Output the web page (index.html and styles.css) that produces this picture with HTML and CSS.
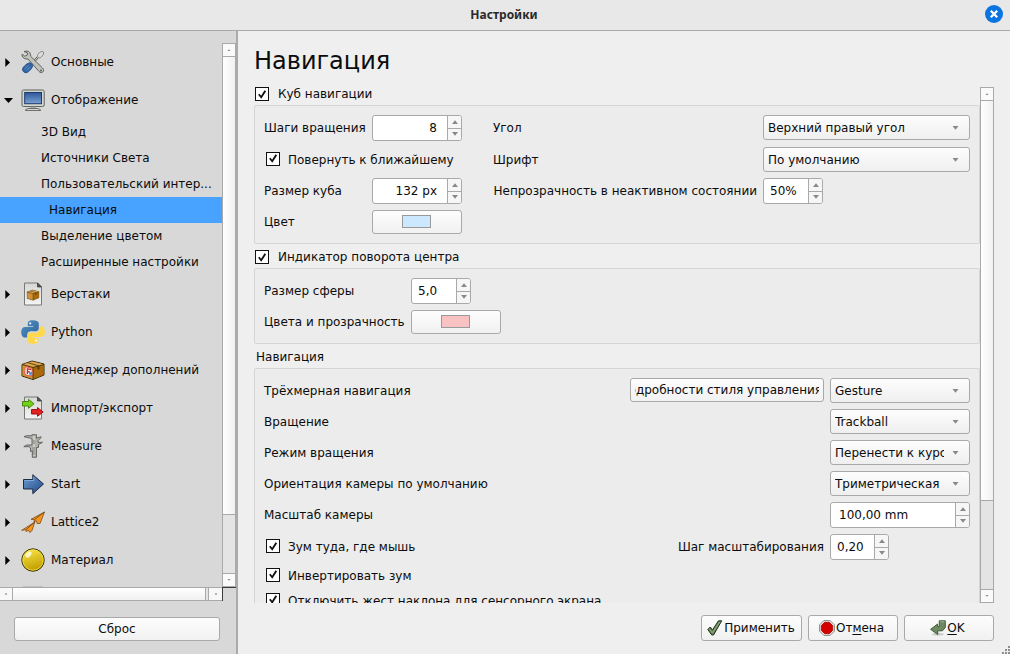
FILE: index.html
```html
<!DOCTYPE html>
<html lang="ru">
<head>
<meta charset="utf-8">
<title>Настройки</title>
<link rel="stylesheet" href="styles.css">
</head>
<body>
<svg class="defs" width="0" height="0">
  <defs>
    <linearGradient id="gBlue" x1="0" y1="0" x2="1" y2="1"><stop offset="0" stop-color="#6f9bd0"/><stop offset="1" stop-color="#204a87"/></linearGradient>
    <linearGradient id="gScreen" x1="0" y1="0" x2="0" y2="1"><stop offset="0" stop-color="#2d5797"/><stop offset="1" stop-color="#7ba2d6"/></linearGradient>
    <linearGradient id="gYellow" x1="0" y1="0" x2="0.3" y2="1"><stop offset="0" stop-color="#fce94f"/><stop offset="1" stop-color="#c4a000"/></linearGradient>
    <linearGradient id="gPage" x1="0" y1="0" x2="0" y2="1"><stop offset="0" stop-color="#d6d8d4"/><stop offset="1" stop-color="#f4f4f3"/></linearGradient>
    <linearGradient id="gPy" x1="0" y1="0" x2="1" y2="1"><stop offset="0" stop-color="#4f8fc4"/><stop offset="1" stop-color="#2f6699"/></linearGradient>
    <symbol id="box" viewBox="0 0 24 24">
      <path d="M1 6.500 11 3l12 3v11l-11 4.500L1 18z" fill="#c17d11" stroke="#3a2a0a"/>
      <path d="M1.500 6.800 12 9.500v11.500L1.500 17.600z" fill="#d0913a"/>
      <path d="M12 9.500l10.500-3v10.300L12 21z" fill="#a9690c"/>
      <path d="M1.800 6.500 11 3.500l11.300 2.700L12 9z" fill="#dba753"/>
      <path d="M6 5.100l10.500 2.800 2-.5L8 4.400z" fill="#6d4a12"/>
      <path d="M16.500 8.300l2-.6v3.300l-2 1z" fill="#5a3a08"/>
      <path d="M1 6.500l11 3 11-3M12 9.500v12" fill="none" stroke="#3a2a0a" stroke-width=".8"/>
    </symbol>
    <symbol id="spin-up" viewBox="0 0 6 4"><path d="M0 4 3 .3 6 4z" fill="#888"/></symbol>
    <symbol id="spin-dn" viewBox="0 0 6 4"><path d="M0 0 3 3.700 6 0z" fill="#888"/></symbol>
    <symbol id="tick" viewBox="0 0 8 9"><path d="M.8 4.200 3.200 7.300 7.300.8" fill="none" stroke="#111" stroke-width="1.800"/></symbol>
    <symbol id="closed" viewBox="0 0 5 9"><path d="M.3 0 5 4.500.3 9z" fill="#000"/></symbol>
    <symbol id="page" viewBox="0 0 24 24"><path d="M3.500 1h13.200l3.800 3.800V23h-17z" fill="url(#gPage)" stroke="#777975"/><path d="M16.500 1l4 4h-4z" fill="#555" stroke="#222" stroke-width=".6"/></symbol>
  </defs>
</svg>

<div class="window">
  <header class="titlebar">
    <span class="title">Настройки</span>
    <svg class="close" viewBox="0 0 20 20"><circle cx="10" cy="10" r="9" fill="#0a74e0"/><path d="M6.800 6.800l6.400 6.400M13.200 6.800l-6.400 6.400" stroke="#fff" stroke-width="2.300"/></svg>
  </header>

  <div class="body">
    <aside class="sidebar">
      <div class="tree-area">
        <nav class="tree">
          <div class="node"><svg class="exp"><use href="#closed"/></svg>
            <svg class="ico" viewBox="0 0 24 24"><path d="M22.300 2c-.8-1.500-4 .2-5.300 2.300-.8 1.400-.5 2.500.3 3.200.8.6 2 .5 3-.5 1.700-1.800 2.800-3.800 2-5z" fill="#dcdedb" stroke="#6b6d69" stroke-width=".8"/><path d="M16.500 7.500 10.800 14" stroke="#555753" stroke-width="2.200"/><path d="M16.500 7.500 10.800 14" stroke="#d3d7cf" stroke-width="1"/><path d="M3 1.500 6 1c2.500.3 4 2.800 3.600 5.200L21.500 18c2 1.800 1 4.600-1.300 4.600-1 0-1.700-.6-2.300-1.300L7 9C4.300 9.500 1.800 8 1 5.800l.2-1.600 2.600 2L6.300 5l.2-2z" fill="#bfc3bb" stroke="#555753" stroke-width=".9"/><path d="M9.300 12.800l2.300 2.400c.5 2-3.800 7.300-6.300 7.500-2.200.2-4-1.700-3.700-3.700.4-2.400 5.500-6.600 7.700-6.200z" fill="#3465a4" stroke="#204a87" stroke-width=".9"/><path d="M3.500 19l4-3.700M6 20.500l3-3.500" stroke="#6e99d2"/><circle cx="20" cy="20.500" r=".9" fill="#555"/></svg>
            <span>Основные</span></div>
          <div class="node"><svg class="exp-open" viewBox="0 0 9 5"><path d="M0 0h9L4.500 5z"/></svg>
            <svg class="ico" viewBox="0 0 24 24"><rect x="1" y="2" width="22.200" height="16.500" rx="1.500" fill="#d3d7cf" stroke="#62645f"/><rect x="3.700" y="4.500" width="16.800" height="11.200" fill="url(#gScreen)" stroke="#1c3a6b"/><path d="M9 18.800h6v1.700H9z" fill="#a8aba4"/><path d="M7 20.500h10l2.500 1.200v.8h-15v-.8z" fill="#d3d7cf" stroke="#555753" stroke-width=".8"/></svg>
            <span>Отображение</span></div>
          <div class="leaf">3D Вид</div>
          <div class="leaf">Источники Света</div>
          <div class="leaf">Пользовательский интер...</div>
          <div class="leaf selected">Навигация</div>
          <div class="leaf">Выделение цветом</div>
          <div class="leaf">Расширенные настройки</div>
          <div class="node"><svg class="exp"><use href="#closed"/></svg>
            <svg class="ico" viewBox="0 0 24 24"><use href="#page"/><use href="#box" x="5.500" y="6.500" width="13" height="13"/></svg>
            <span>Верстаки</span></div>
          <div class="node"><svg class="exp"><use href="#closed"/></svg>
            <svg class="ico" viewBox="0 0 24 24"><path d="M11.800.3C8 .3 6.800 1.800 6.800 3.700v2.500h5.500V7H4.200C1.500 7 .2 9 .2 12s1.300 5.500 3.600 5.500h2.400v-2.700c0-2 1.600-3.500 3.500-3.500h5.200c1.700 0 2.900-1.400 2.900-3V3.700c0-2-2-3.400-6-3.400z" fill="url(#gPy)"/><path d="M12.300 23.800c3.800 0 5-1.500 5-3.400v-2.500h-5.500v-.8h8.100c2.700 0 4-2 4-5s-1.300-5.600-3.600-5.600h-2v2.800c0 2-1.600 3.400-3.500 3.400H9.400c-1.700 0-2.900 1.500-2.900 3v4.700c0 2 2 3.400 5.800 3.400z" fill="#ffd94a"/><circle cx="9.200" cy="3.400" r="1.100" fill="#e4ecf3"/><circle cx="15" cy="20.700" r="1.100" fill="#fff7cf"/></svg>
            <span>Python</span></div>
          <div class="node"><svg class="exp"><use href="#closed"/></svg>
            <svg class="ico" viewBox="0 0 24 24"><use href="#box" y="0" width="24" height="24"/><path d="M5 8.800l5 1.400c1.500.8 1.800 6.500.3 7.800l-5.800-1.200c-1-1.500-1-7 .5-8z" fill="#f2f5fa" stroke="#e8413c" stroke-width=".8"/><path d="M6.400 16V10.800l3.600.8M6.400 13.500l2.600.6" fill="none" stroke="#cc2b26" stroke-width="1.300"/><path d="M8.500 16.500l2.500-2" stroke="#4a90d9" stroke-width="2.400"/></svg>
            <span>Менеджер дополнений</span></div>
          <div class="node"><svg class="exp"><use href="#closed"/></svg>
            <svg class="ico" viewBox="0 0 24 24"><use href="#page"/><path d="M1.500 5.500h6V3.300L13 7.800l-5.500 4.500V10h-6z" fill="#73d216" stroke="#3f7d08" stroke-width=".9"/><path d="M10.500 13.500h6v-2l5.700 4.500-5.700 4.300v-2.300h-6z" fill="#e32222" stroke="#8c0a0a" stroke-width=".9"/></svg>
            <span>Импорт/экспорт</span></div>
          <div class="node"><svg class="exp"><use href="#closed"/></svg>
            <svg class="ico" viewBox="0 0 24 24"><path d="M3 2.700 5.500 1.700H11V.7h4.500v3.500l4.500-1.500v1l-3 3v1.600h4.500L17.500 10.500v3H15.500v9.800H11.300V17L9.500 17.500V14L8 12.700H2.800L5.500 11H11V5L9 4z" fill="#aeb2aa" stroke="#50524d" stroke-width=".8"/><path d="M13 2v20" stroke="#e3e5e1"/><path d="M11.500 14h2.500M11.500 16h2.500M11.500 18h2.500M11.500 20h2.500M12 7h2M12 9h2" stroke="#555753" stroke-width=".7"/></svg>
            <span>Measure</span></div>
          <div class="node"><svg class="exp"><use href="#closed"/></svg>
            <svg class="ico" viewBox="0 0 24 24"><path d="M2.500 7.500h9.300V2.700L22.500 12 11.800 21.700V17H2.500z" fill="url(#gBlue)" stroke="#1c2b45" stroke-width="1"/><path d="M3.500 8.500h9.300V5" fill="none" stroke="#8fb3e0" stroke-width=".8"/></svg>
            <span>Start</span></div>
          <div class="node"><svg class="exp"><use href="#closed"/></svg>
            <svg class="ico" viewBox="0 0 24 24"><path d="M23.500 2 10 9.300l3.300.4-.3 2 2.400-1 .7 2.800h3z" fill="#f79520" stroke="#6b4010" stroke-width=".7"/><path d="M13.800 12 .7 20.300l4-.6.300 1.800 2.500-1.200 1.300 2.200 2.300-2z" fill="#f79520" stroke="#6b4010" stroke-width=".7"/><path d="M23.500 2 13.300 9.700M13.800 12 5 19.700" stroke="#5c3408" stroke-width=".7"/></svg>
            <span>Lattice2</span></div>
          <div class="node"><svg class="exp"><use href="#closed"/></svg>
            <svg class="ico" viewBox="0 0 24 24"><circle cx="12" cy="12" r="11.200" fill="url(#gYellow)" stroke="#302b00"/><circle cx="12" cy="12" r="10.200" fill="none" stroke="#f5e14a" stroke-width=".8"/><ellipse cx="7.500" cy="6.500" rx="3.600" ry="2.300" fill="#fffbe0" opacity=".85" transform="rotate(-45 7.500 6.500)"/></svg>
            <span>Материал</span></div>
          <div class="node"><svg class="ico last" viewBox="0 0 24 24"><rect x="2" width="20" height="22" fill="#bfbfbf"/></svg></div>
        </nav>
        <div class="vscroll">
          <div class="vbtn"><svg><use href="#spin-up"/></svg></div>
          <div class="vthumb side-thumb"></div>
          <div class="vtrack"></div>
          <div class="vbtn end"><svg><use href="#spin-dn"/></svg></div>
        </div>
      </div>
      <div class="hscroll">
        <div class="hbtn"><i></i></div><div class="hthumb"></div><div class="hbtn right-btn"><i></i></div><div class="hcorner"></div>
      </div>
      <button class="btn reset">Сброс</button>
    </aside>

    <main class="main">
      <h1>Навигация</h1>
      <div class="scroll-area">
        <div class="content">
          <label class="group-title check"><span class="cb"><svg><use href="#tick"/></svg></span>Куб навигации</label>
          <section class="group cube">
            <span>Шаги вращения</span>
            <div class="spin num"><b>8</b><div class="steps"><i><svg><use href="#spin-up"/></svg></i><i><svg><use href="#spin-dn"/></svg></i></div></div>
            <span class="col3">Угол</span>
            <div class="combo"><b>Верхний правый угол</b><svg><use href="#spin-dn"/></svg></div>

            <label class="check inner wide"><span class="cb"><svg><use href="#tick"/></svg></span>Повернуть к ближайшему</label>
            <span class="col3">Шрифт</span>
            <div class="combo"><b>По умолчанию</b><svg><use href="#spin-dn"/></svg></div>

            <span>Размер куба</span>
            <div class="spin num"><b>132 px</b><div class="steps"><i><svg><use href="#spin-up"/></svg></i><i><svg><use href="#spin-dn"/></svg></i></div></div>
            <span class="col3 long">Непрозрачность в неактивном состоянии</span>
            <div class="spin w60"><b>50%</b><div class="steps"><i><svg><use href="#spin-up"/></svg></i><i><svg><use href="#spin-dn"/></svg></i></div></div>

            <span>Цвет</span>
            <button class="btn color"><i class="swatch blue"></i></button>
          </section>

          <label class="group-title check"><span class="cb"><svg><use href="#tick"/></svg></span>Индикатор поворота центра</label>
          <section class="group sphere">
            <span>Размер сферы</span>
            <div class="spin w60"><b>5,0</b><div class="steps"><i><svg><use href="#spin-up"/></svg></i><i><svg><use href="#spin-dn"/></svg></i></div></div>
            <span>Цвета и прозрачность</span>
            <button class="btn color"><i class="swatch pink"></i></button>
          </section>

          <div class="group-title plain">Навигация</div>
          <section class="group nav">
            <span>Трёхмерная навигация</span>
            <button class="btn details"><b><span>Подробности стиля управления</span></b></button>
            <div class="combo"><b>Gesture</b><svg><use href="#spin-dn"/></svg></div>

            <span class="wide">Вращение</span>
            <div class="combo"><b>Trackball</b><svg><use href="#spin-dn"/></svg></div>

            <span class="wide">Режим вращения</span>
            <div class="combo"><b>Перенести к курсору</b><svg><use href="#spin-dn"/></svg></div>

            <span class="wide">Ориентация камеры по умолчанию</span>
            <div class="combo"><b>Триметрическая</b><svg><use href="#spin-dn"/></svg></div>

            <span class="wide">Масштаб камеры</span>
            <div class="spin scale"><b>100,00 mm</b><div class="steps"><i><svg><use href="#spin-up"/></svg></i><i><svg><use href="#spin-dn"/></svg></i></div></div>

            <label class="check inner"><span class="cb"><svg><use href="#tick"/></svg></span>Зум туда, где мышь</label>
            <span class="right">Шаг масштабирования</span>
            <div class="spin w59"><b>0,20</b><div class="steps"><i><svg><use href="#spin-up"/></svg></i><i><svg><use href="#spin-dn"/></svg></i></div></div>

            <label class="check inner full"><span class="cb"><svg><use href="#tick"/></svg></span>Инвертировать зум</label>
            <label class="check inner full"><span class="cb"><svg><use href="#tick"/></svg></span>Отключить жест наклона для сенсорного экрана</label>
          </section>
        </div>
        <div class="vscroll">
          <div class="vbtn"><svg><use href="#spin-up"/></svg></div>
          <div class="vthumb main-thumb"></div>
          <div class="vtrack"></div>
          <div class="vbtn end"><svg><use href="#spin-dn"/></svg></div>
        </div>
      </div>

      <footer class="actions">
        <button class="btn apply"><svg viewBox="0 0 16 16"><path d="M.8 9.500 3.300 7l2 3.200L11.500.8h3.200L6.500 15H4.800z" fill="#6a8a5c" stroke="#1d2b16"/><path d="M2.500 9.300l2.800 3.500L13 1.800" fill="none" stroke="#8fae80"/></svg>Применить</button>
        <button class="btn cancel"><svg viewBox="0 0 16 16"><path d="M4.800.6h6.400l4.200 4.200v6.400l-4.200 4.200H4.800L.6 11.200V4.800z" fill="#eee" stroke="#8a8a8a"/><path d="M5.600 2.300h4.800l3.300 3.300v4.800l-3.300 3.300H5.600l-3.300-3.300V5.600z" fill="#d40000" stroke="#a00" stroke-width=".8"/></svg><span>От<u>м</u>ена</span></button>
        <button class="btn ok"><svg viewBox="0 0 16 16"><ellipse cx="8" cy="14.300" rx="6" ry="1.500" fill="#ccc"/><path d="M9.300.8h6v6.700L12.500 10.800H7.700v3.700L.6 9.300l7-5.300v2.500h1.700z" fill="#6f8a63" stroke="#465a3c"/><path d="M10.300 1.800h4.200" stroke="#9bb38f"/></svg><span><u>O</u>K</span></button>
      </footer>
      <svg class="grip" viewBox="0 0 8 8" fill="#8e8e8e"><path d="M6 0h2v2H6zM3 3h2v2H3zM6 3h2v2H6zM0 6h2v2H0zM3 6h2v2H3zM6 6h2v2H6z"/></svg>
    </main>
  </div>
</div>
</body>
</html>
```

FILE: styles.css
```css
* { box-sizing: border-box; }
body {
  margin: 0;
  font: 12px/14px "DejaVu Sans", sans-serif;
  color: #0c0c0c;
}
b, i { font-weight: normal; font-style: normal; }
svg { display: block; }
.defs { position: absolute; }
.window { width: 1010px; height: 654px; display: flex; flex-direction: column; overflow: hidden; background: #efefef; }

.titlebar { height: 31px; flex: none; display: flex; align-items: center; justify-content: flex-end; padding-right: 6px; background: #e8e8e8; border-bottom: 1px solid #a8a8a8; }
.title { flex: 1; text-align: center; padding-left: 30px; margin-right: 6px; font: bold 12px/18px "Noto Sans", sans-serif; color: #2a2a2a; }
.close { width: 20px; height: 20px; margin-bottom: 2px; }

.body { flex: 1; display: flex; min-height: 0; }
.sidebar { width: 238px; flex: none; border-right: 2px solid #ababab; background: #d8d8d8; padding-top: 12px; display: flex; flex-direction: column; }
.tree-area { height: 544px; display: flex; }
.tree { width: 222px; overflow: hidden; }
.node { height: 38px; display: flex; align-items: center; padding-left: 5px; }
.exp { width: 5px; height: 9px; margin-right: 11px; margin-top: 1px; }
.exp-open { width: 9px; height: 5px; margin: 0 8px 0 -1px; }
.ico { width: 24px; height: 24px; margin-right: 6px; flex: none; }
.last { margin-left: 16px; }
.leaf { height: 26px; line-height: 26px; padding-left: 41px; white-space: nowrap; }
.selected { background: #48a2ff; padding-left: 49px; }

.vscroll { width: 14px; display: flex; flex-direction: column; border: solid #a9a9a9; border-width: 0 1px; background: #e4e4e4; flex: none; }
.vbtn { height: 14px; flex: none; display: flex; align-items: center; justify-content: center; background: #fafafa; border: solid #a9a9a9; border-width: 1px 0; }
.vbtn svg { width: 4px; height: 2px; }
.vthumb { background: linear-gradient(90deg, #fff, #f1f1f1); border-bottom: 1px solid #a9a9a9; }
.side-thumb { height: 458px; }
.main-thumb { height: 400px; }
.vtrack { flex: 1; }

.hscroll { display: flex; width: 236px; height: 14px; }
.hbtn { width: 13px; border: solid #a9a9a9; border-width: 1px 1px 1px 0; background: #f8f8f8; display: flex; align-items: center; justify-content: center; }
.hbtn i { width: 2px; height: 2px; background: #b5b5b5; }
.hthumb { width: 193px; border: solid #a9a9a9; border-width: 1px 1px 1px 0; background: linear-gradient(#fff, #f1f1f1); }
.right-btn { width: 16px; border-width: 1px 0; padding-left: 3px; background: linear-gradient(90deg, #e4e4e4 2px, #a9a9a9 2px, #a9a9a9 3px, #f8f8f8 3px); }
.hcorner { width: 14px; border: solid #3d3d3d; border-width: 1px 0 0 1px; }

.btn { display: flex; align-items: center; justify-content: center; padding: 0; margin: 0; border: 1px solid #a9a9a9; border-radius: 3px; background: linear-gradient(#fdfdfd, #f1f1f1); font: inherit; color: inherit; }
.reset { width: 206px; height: 24px; margin: 16px 0 0 14px; }

.main { flex: 1; padding-left: 16px; position: relative; min-width: 0; }
h1 { margin: 0; height: 56px; font-size: 24px; font-weight: normal; line-height: 60px; }
.scroll-area { width: 740px; height: 516px; display: flex; }
.content { width: 726px; overflow: hidden; }
.group-title { height: 18px; display: flex; }
.check { display: flex; align-items: center; }
.cb { width: 14px; height: 14px; border: 1px solid #111; background: #fff; margin: 0 9px 0 1px; display: flex; align-items: center; justify-content: center; flex: none; }
.cb svg { width: 8px; height: 9px; }
.inner .cb { margin: 0 8px 2px 2px; }
.group-title.check { height: 14px; margin-bottom: 4px; }
.group { border: 1px solid #d5d5d5; border-radius: 2px; background: #ececec; padding: 9px; display: grid; column-gap: 6px; row-gap: 6px; align-items: center; white-space: nowrap; }
.cube { height: 139px; margin-bottom: 6px; grid-template-columns: 102px 90px 289px 207px; grid-template-rows: 26px 25px 26px 24px; }
.cube .col3 { padding-left: 25px; }
.cube .long { padding-left: 25.5px; }
.cube .wide { grid-column: span 2; }
.sphere { height: 76px; margin-bottom: 6px; grid-template-columns: 141px 90px; grid-template-rows: 26px 24px; }
.plain { height: 18px; padding-left: 2px; line-height: 14px; }
.nav { grid-template-columns: 360px 194px 140px; grid-template-rows: 25px 25px 25px 25px 26px 26px 19px 19px; }
.nav .wide { grid-column: span 2; }
.nav .full { grid-column: span 3; }
.right { text-align: right; }

.combo { height: 25px; align-self: start; border: 1px solid #a9a9a9; border-radius: 3px; background: linear-gradient(#fdfdfd, #efefef); display: flex; align-items: center; padding: 0 10px 0 4px; min-width: 0; }
.combo b { flex: 1; overflow: hidden; margin-right: 8px; min-width: 0; }
.combo svg { width: 7px; height: 4px; flex: none; }
.spin { height: 26px; border: 1px solid #a9a9a9; border-radius: 3px; background: #fff; display: flex; overflow: hidden; }
.spin b { flex: 1; line-height: 24px; padding-left: 6px; }
.num b { text-align: right; padding-right: 10px; }
.scale b { padding-left: 8px; }
.w60 { width: 60px; }
.w59 { width: 59px; }
.steps { width: 14px; flex: none; border-left: 1px solid #a9a9a9; display: flex; flex-direction: column; background: #f6f6f6; }
.steps i { flex: 1; display: flex; align-items: center; justify-content: center; }
.steps i + i { border-top: 1px solid #a9a9a9; }
.steps svg { width: 6px; height: 4px; }
.color { height: 24px; width: 90px; padding-right: 1px; }
.swatch { width: 29px; height: 13px; margin-bottom: 1px; border: 1px solid #999; }
.blue { background: #cce8ff; }
.pink { background: #f8c2c2; }
.details { height: 24px; padding: 0 4px; align-self: start; overflow: hidden; min-width: 0; }
.details b { width: 184px; overflow: hidden; display: flex; justify-content: flex-end; white-space: nowrap; }
.details span { margin-right: -3px; }

.actions { display: flex; gap: 6px; justify-content: flex-end; padding: 12px 16px 0 0; }
.actions .btn { height: 26px; width: 90px; padding-right: 3px; }
.actions svg { width: 16px; height: 16px; margin-right: 1px; }
.actions .apply { width: 101px; padding-right: 1px; }
u { text-underline-offset: 2px; }
.grip { position: absolute; right: 0; bottom: 0; width: 8px; height: 8px; }
```
